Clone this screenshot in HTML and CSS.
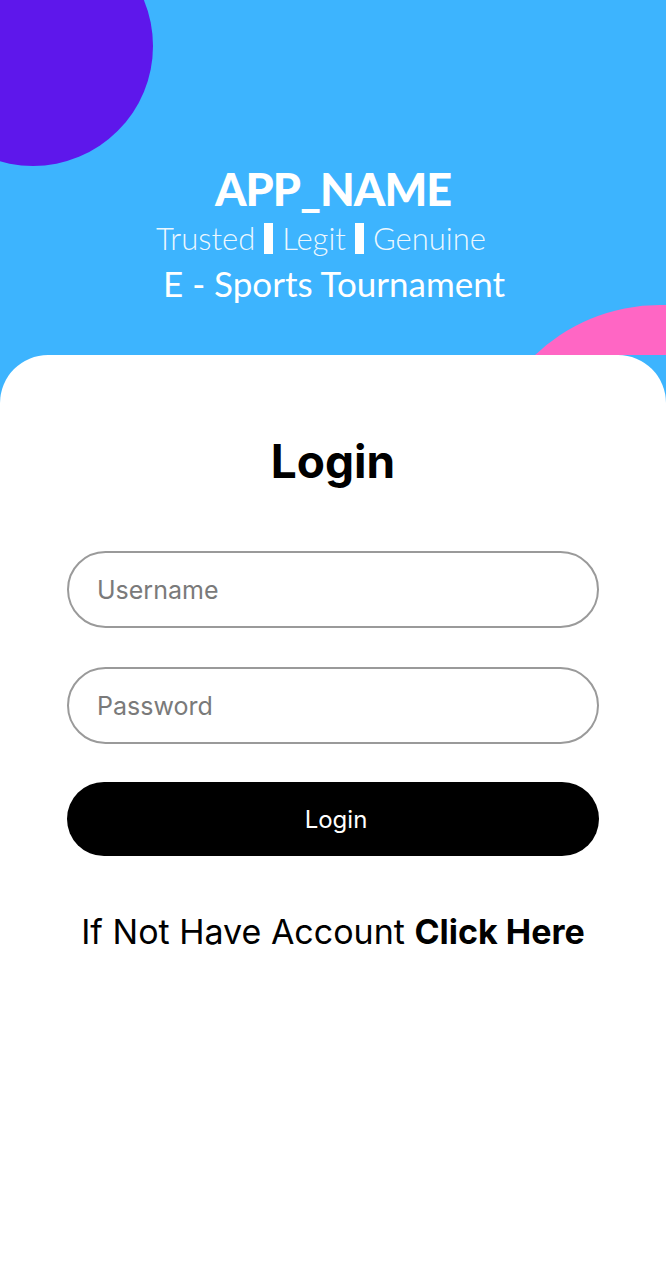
FILE: index.html
```html
<!DOCTYPE html>
<html>
<head>
<meta charset="utf-8">
<link rel="stylesheet" href="styles.css">
</head>
<body>
<div class="page">
  <header class="hero">
    <div class="blob blob-purple"></div>
    <div class="blob blob-pink"></div>
    <div class="brand">
      <div class="app-name">APP_NAME</div>
      <div class="tagline">Trusted <span class="bar"></span> Legit <span class="bar"></span> Genuine</div>
      <div class="subtitle">E - Sports Tournament</div>
    </div>
  </header>
  <main class="card">
    <h1 class="title">Login</h1>
    <form class="form">
      <input class="field" type="text" placeholder="Username">
      <input class="field" type="password" placeholder="Password">
      <button class="btn" type="button">Login</button>
    </form>
    <p class="signup">If Not Have Account <b>Click Here</b></p>
  </main>
</div>
</body>
</html>
```

FILE: styles.css
```css
* { box-sizing: border-box; }
html, body { margin: 0; padding: 0; }
body {
  font-family: "Inter", "Noto Sans", sans-serif;
  background: #3db4fe;
  width: 666px;
  height: 1280px;
  overflow: hidden;
}
.page {
  display: flex;
  flex-direction: column;
  height: 1280px;
  overflow: hidden;
}
.hero {
  position: relative;
  height: 355px;
  flex: none;
  display: flex;
  justify-content: center;
  padding-top: 163px;
  overflow: hidden;
}
.blob {
  position: absolute;
  border-radius: 50%;
}
.blob-purple {
  width: 240px;
  height: 240px;
  left: -87px;
  top: -74px;
  background: #5e17eb;
}
.blob-pink {
  width: 362px;
  height: 362px;
  left: 479px;
  top: 305px;
  background: #ff66c4;
}
.brand {
  position: relative;
  display: flex;
  flex-direction: column;
  align-items: center;
  color: #fff;
  font-family: "Lato", sans-serif;
}
.app-name {
  font-size: 45px;
  font-weight: 900;
  line-height: 52px;
  letter-spacing: -1px;
}
.tagline {
  margin-top: 5px;
  margin-right: 24px;
  font-size: 31px;
  font-weight: 300;
  line-height: 36px;
  color: rgba(255,255,255,0.92);
  display: flex;
  align-items: center;
  gap: 9px;
}
.bar {
  display: inline-block;
  width: 9px;
  height: 31px;
  background: #fff;
}
.subtitle {
  margin-top: 6px;
  margin-left: 2px;
  font-size: 35px;
  font-weight: 400;
  line-height: 42px;
}
.card {
  position: relative;
  z-index: 1;
  flex: 1;
  background: #fff;
  border-radius: 48px 48px 0 0;
  display: flex;
  flex-direction: column;
  align-items: center;
  padding-top: 74px;
}
.title {
  margin: 0;
  font-size: 46px;
  font-weight: 700;
  line-height: 64px;
  color: #000;
}
.form {
  margin-top: 58px;
  width: 532px;
  display: flex;
  flex-direction: column;
  gap: 39px;
}
.field {
  height: 77px;
  border: 2px solid #9a9a9a;
  border-radius: 39px;
  padding: 0 28px;
  font-family: inherit;
  font-size: 25px;
  color: #333;
  outline: none;
}
.field::placeholder { color: #7a7a7a; }
.btn {
  height: 74px;
  margin-top: -1px;
  border: none;
  border-radius: 37px;
  background: #000;
  color: #fff;
  font-family: inherit;
  font-size: 24px;
  padding-left: 12px;
}
.signup {
  margin: 56px 0 0;
  font-size: 34px;
  line-height: 40px;
  color: #000;
}
.signup b { font-weight: 700; }
```
